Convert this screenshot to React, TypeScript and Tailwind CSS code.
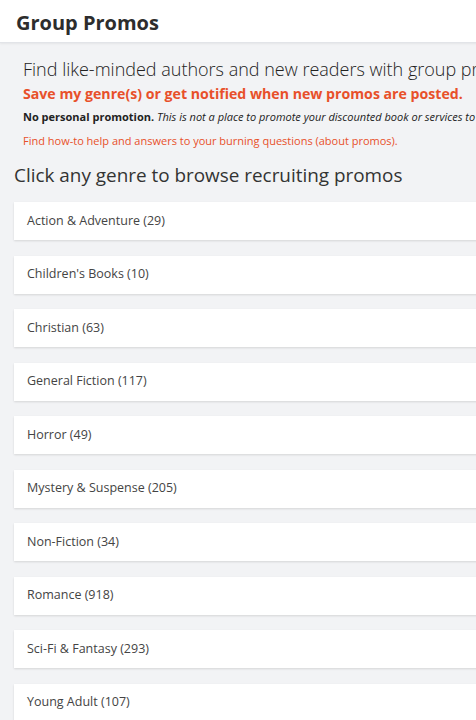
const genres = [
  "Action & Adventure (29)",
  "Children's Books (10)",
  "Christian (63)",
  "General Fiction (117)",
  "Horror (49)",
  "Mystery & Suspense (205)",
  "Non-Fiction (34)",
  "Romance (918)",
  "Sci-Fi & Fantasy (293)",
  "Young Adult (107)",
];

export default function App() {
  return (
    <div className="w-[476px] h-[720px] overflow-hidden bg-[#f2f3f5] text-[#333] font-['Open_Sans',sans-serif]">
      <div className="w-[760px]">
        <header className="h-[43px] bg-white border-b border-[#e2e4e8] shadow-[0_1px_2px_rgba(0,0,0,0.06)] flex items-center pl-[16px] pt-[3px]">
          <h1 className="text-[20px] font-bold text-[#2d2d2d]">Group Promos</h1>
        </header>

        <div className="pl-[23px] pt-[13px] whitespace-nowrap">
          <p className="text-[18px] leading-[26px] font-light text-[#222]">
            Find like-minded authors and new readers with group promos to grow your list.
          </p>
          <p className="mt-[2px] text-[14.15px] leading-[20px] font-bold text-[#e8502a]">
            Save my genre(s) or get notified when new promos are posted.
          </p>
          <p className="mt-[5px] text-[11px] leading-[16px] text-[#222]">
            <span className="font-bold">No personal promotion.</span>{" "}
            <span className="italic">
              This is not a place to promote your discounted book or services to other authors.
            </span>
          </p>
          <p className="mt-[8px] text-[11px] leading-[16px] text-[#e8502a]">
            Find how-to help and answers to your burning questions (about promos).
          </p>
        </div>

        <div className="pl-[14px]">
          <h2 className="mt-[13px] text-[18.9px] leading-[26px] text-[#333] whitespace-nowrap">
            Click any genre to browse recruiting promos
          </h2>
          <div className="mt-[14px] flex flex-col gap-[15.5px]">
            {genres.map((g) => (
              <div
                key={g}
                className="h-[38px] bg-white flex items-center pl-[13px] text-[12.5px] text-[#444] shadow-[0_1px_2px_rgba(0,0,0,0.12)]"
              >
                {g}
              </div>
            ))}
          </div>
        </div>
      </div>
    </div>
  );
}
